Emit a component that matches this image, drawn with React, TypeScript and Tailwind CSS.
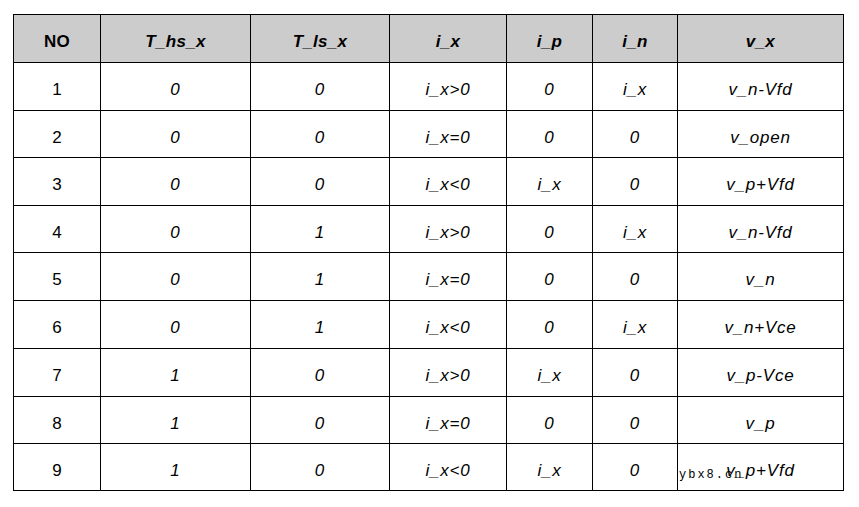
import React from "react";

const header = ["NO", "T_hs_x", "T_ls_x", "i_x", "i_p", "i_n", "v_x"];
const rows = [
  ["1", "0", "0", "i_x>0", "0", "i_x", "v_n-Vfd"],
  ["2", "0", "0", "i_x=0", "0", "0", "v_open"],
  ["3", "0", "0", "i_x<0", "i_x", "0", "v_p+Vfd"],
  ["4", "0", "1", "i_x>0", "0", "i_x", "v_n-Vfd"],
  ["5", "0", "1", "i_x=0", "0", "0", "v_n"],
  ["6", "0", "1", "i_x<0", "0", "i_x", "v_n+Vce"],
  ["7", "1", "0", "i_x>0", "i_x", "0", "v_p-Vce"],
  ["8", "1", "0", "i_x=0", "0", "0", "v_p"],
  ["9", "1", "0", "i_x<0", "i_x", "0", "v_p+Vfd"],
];

export default function App() {
  return (
    <div className="w-[859px] h-[507px] bg-white relative pt-[14px] pl-[13px] text-black font-['Liberation_Sans',Arial,sans-serif]">
      <div className="inline-grid grid-cols-[87px_150px_139px_117px_86px_85px_166px] grid-rows-[48px_48px_47px_48px_47px_48px_48px_48px_47px_47px] border-l border-t border-black">
        {header.map((h, i) => (
          <div
            key={`h${i}`}
            className={`flex items-center justify-center pt-[6px] bg-[#cccccc] border-r border-b border-black text-[17px] font-bold tracking-[0.3px] ${i === 0 ? "" : "italic"}`}
          >
            {h}
          </div>
        ))}
        {rows.map((r, ri) =>
          r.map((c, ci) => (
            <div
              key={`${ri}-${ci}`}
              className={`flex items-center justify-center pt-[7px] border-r border-b border-black text-[17px] ${ci === 0 ? "" : "italic tracking-[0.8px]"}`}
            >
              {c}
            </div>
          ))
        )}
      </div>
      <div className="absolute left-[679px] top-[468px] text-[12px] leading-[14px] tracking-[2px] text-black font-['Liberation_Mono','DejaVu_Sans_Mono',monospace]">
        ybx8.cn
      </div>
    </div>
  );
}
